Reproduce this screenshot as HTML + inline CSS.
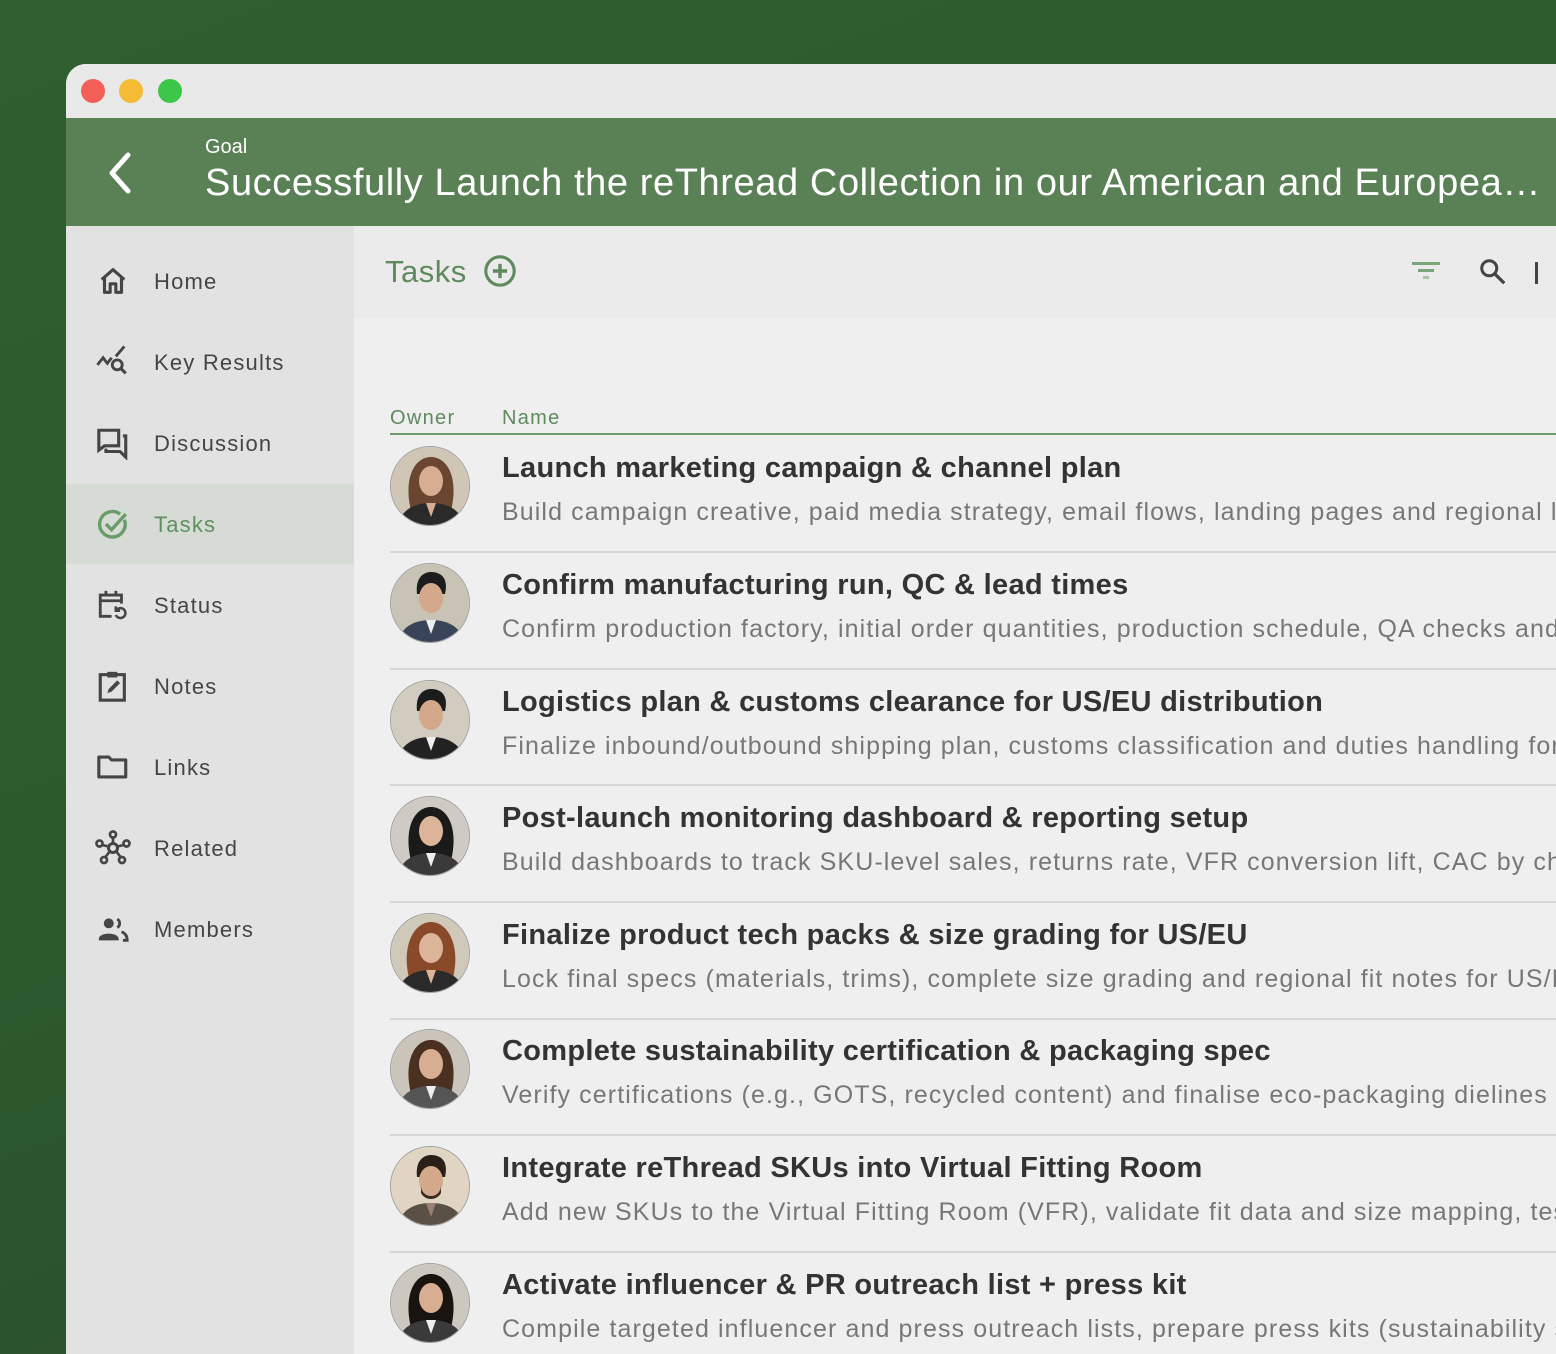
<!DOCTYPE html>
<html><head><meta charset="utf-8"><style>
*{margin:0;padding:0;box-sizing:border-box}
html,body{width:1556px;height:1354px;overflow:hidden}
body{font-family:"Liberation Sans",sans-serif;background:linear-gradient(160deg,#2f5e30 0%,#2c5a2d 50%,#284a29 100%);position:relative}
.win{position:absolute;left:66px;top:64px;width:1490px;height:1290px;border-top-left-radius:20px;overflow:hidden;background:#efefef}
.tb{position:absolute;left:0;top:0;width:1490px;height:54px;background:#e9e9e9}
.dot{position:absolute;top:15px;width:24px;height:24px;border-radius:50%}
.hdr{position:absolute;top:54px;left:0;width:1490px;height:108px;background:#5a8055;color:#fff}
.goal{position:absolute;left:139px;top:18px;font-size:20px}
.title{position:absolute;left:139px;top:44px;font-size:38px;letter-spacing:.6px;width:1351px;white-space:nowrap;overflow:hidden;text-overflow:ellipsis}
.side{position:absolute;left:0;top:162px;width:288px;height:1130px;background:#e2e2e2}
.item{position:absolute;left:0;width:288px;height:80px;color:#454545;font-size:22px;letter-spacing:1.2px}
.item svg{position:absolute;left:30px;top:23px}
.item span{position:absolute;left:88px;top:28px}
.item.act{background:#d6dcd5;color:#5f8f5f}
.tbar{position:absolute;left:288px;top:162px;width:1202px;height:92px;background:#ebebeb}
.th{position:absolute;top:343px;font-size:20px;color:#5e8a5e;letter-spacing:1.3px}
.row{position:absolute;left:324px;width:1166px;height:110px}
.av{position:absolute;left:0;top:0;width:80px;height:80px;border-radius:50%;overflow:hidden;border:1.5px solid #a0a0a0}
.t{position:absolute;left:112px;top:6px;font-size:29px;font-weight:bold;color:#333;white-space:nowrap;letter-spacing:.3px}
.s{position:absolute;left:112px;top:52px;font-size:25px;color:#777;white-space:nowrap;letter-spacing:1.1px}
.sep{position:absolute;left:324px;width:1166px;height:2px;background:#d6d6d6}
</style></head><body>
<div class="win">
<div class="tb">
<div class="dot" style="left:15px;background:#f25f57"></div>
<div class="dot" style="left:53px;background:#f6bb34"></div>
<div class="dot" style="left:92px;background:#3cc64a"></div>
</div>
<div class="hdr">
<svg style="position:absolute;left:40px;top:33px" width="28" height="44" viewBox="0 0 28 44"><path d="M22 4 L6 22 L22 40" fill="none" stroke="#fff" stroke-width="5" stroke-linecap="round" stroke-linejoin="round"/></svg>
<div class="goal">Goal</div>
<div class="title">Successfully Launch the reThread Collection in our American and European Markets</div>
</div>
<div class="side">
<div class="item" style="top:15px"><svg width="34" height="34" viewBox="0 0 24 24"><path d="M4 11 L12 4 L20 11 M6 9.5 V20 H10 V14 H14 V20 H18 V9.5" fill="none" stroke="#454545" stroke-width="2.2" stroke-linejoin="round"/></svg><span>Home</span></div>
<div class="item" style="top:96px"><svg width="34" height="34" viewBox="0 0 24 24"><path d="M1 14 L5 9 L8 13 L11 9 M14 8 L20 1" fill="none" stroke="#454545" stroke-width="2"/><circle cx="15" cy="14" r="3.5" fill="none" stroke="#454545" stroke-width="2"/><path d="M17.5 16.5 L21 20" stroke="#454545" stroke-width="2.2"/></svg><span>Key Results</span></div>
<div class="item" style="top:177px"><svg width="34" height="34" viewBox="0 0 24 24"><path d="M2 3 H16 V14 H6 L2 17 Z" fill="none" stroke="#454545" stroke-width="2.2"/><path d="M19 7 H21 V22 L17 18 H7 V16" fill="none" stroke="#454545" stroke-width="2.2"/></svg><span>Discussion</span></div>
<div class="item act" style="top:258px"><svg width="34" height="34" viewBox="0 0 24 24"><path d="M20 9 A9 9 0 1 1 17 5" fill="none" stroke="#6a9c6a" stroke-width="2.4"/><path d="M7 12 L11 16 L21 5" fill="none" stroke="#6a9c6a" stroke-width="2.4"/></svg><span>Tasks</span></div>
<div class="item" style="top:339px"><svg width="34" height="34" viewBox="0 0 24 24"><path d="M11 20 H3 V5 H18 V11 M3 9 H18 M7 2 V6 M14 2 V6" fill="none" stroke="#454545" stroke-width="2"/><path d="M14 19 A3.5 3.5 0 1 0 15 15 M14 13 V16 H17" fill="none" stroke="#454545" stroke-width="1.8"/></svg><span>Status</span></div>
<div class="item" style="top:420px"><svg width="34" height="34" viewBox="0 0 24 24"><rect x="3" y="4" width="17" height="18" fill="none" stroke="#454545" stroke-width="2.2"/><rect x="8" y="2" width="7" height="4" fill="#454545"/><path d="M8 17 L9 14 L15 8 L17 10 L11 16 Z" fill="#454545"/></svg><span>Notes</span></div>
<div class="item" style="top:501px"><svg width="34" height="34" viewBox="0 0 24 24"><path d="M2 5 H9 L11 7 H21 V19 H2 Z" fill="none" stroke="#454545" stroke-width="2.2" stroke-linejoin="round"/></svg><span>Links</span></div>
<div class="item" style="top:582px"><svg width="36" height="36" viewBox="0 0 24 24" style="left:29px;top:22px"><circle cx="12" cy="12" r="3" fill="none" stroke="#454545" stroke-width="2"/><circle cx="12" cy="3" r="2" fill="none" stroke="#454545" stroke-width="1.8"/><circle cx="3" cy="9" r="2" fill="none" stroke="#454545" stroke-width="1.8"/><circle cx="21" cy="9" r="2" fill="none" stroke="#454545" stroke-width="1.8"/><circle cx="6" cy="20" r="2" fill="none" stroke="#454545" stroke-width="1.8"/><circle cx="18" cy="20" r="2" fill="none" stroke="#454545" stroke-width="1.8"/><path d="M12 5 V9 M5 10 L9 11 M19 10 L15 11 M7 18 L10 14 M17 18 L14 14" stroke="#454545" stroke-width="1.8"/></svg><span>Related</span></div>
<div class="item" style="top:663px"><svg width="34" height="34" viewBox="0 0 24 24"><circle cx="9" cy="8" r="3.5" fill="#454545"/><path d="M2 19 C2 14 16 14 16 19 V20 H2 Z" fill="#454545"/><path d="M15 5 A3.5 3.5 0 0 1 15 11 M18 14 C21 15 22 17 22 20 H19" fill="none" stroke="#454545" stroke-width="2"/></svg><span>Members</span></div>
</div>
<div class="tbar">
<div style="position:absolute;left:31px;top:28px;font-size:31px;color:#5e8a5e;letter-spacing:.5px">Tasks</div>
<svg style="position:absolute;left:129px;top:28px" width="34" height="34" viewBox="0 0 24 24"><circle cx="12" cy="12" r="10" fill="none" stroke="#5e8a5e" stroke-width="2.2"/><path d="M12 7 V17 M7 12 H17" stroke="#5e8a5e" stroke-width="2.4"/></svg>
<div style="position:absolute;left:1058px;top:36px;width:28px;height:3px;background:#7aa578"></div>
<div style="position:absolute;left:1064px;top:43px;width:16px;height:3px;background:#7aa578"></div>
<div style="position:absolute;left:1069px;top:50px;width:6px;height:3px;background:#a8c4a6"></div>
<svg style="position:absolute;left:1124px;top:31px" width="30" height="30" viewBox="0 0 24 24"><circle cx="9" cy="9" r="6" fill="none" stroke="#444" stroke-width="2.4"/><path d="M13.5 13.5 L21 21" stroke="#444" stroke-width="2.6"/></svg>
<div style="position:absolute;left:1181px;top:36px;width:3px;height:22px;background:#444"></div>
</div>

<div class="th" style="left:324px">Owner</div>
<div class="th" style="left:436px">Name</div>
<div style="position:absolute;left:324px;top:369px;width:1166px;height:2px;background:#6e9a6c"></div>

<div class="row" style="top:382px"><div class="av"><svg width="80" height="80" viewBox="0 0 80 80"><rect width="80" height="80" fill="#cfc6b6"/><path d="M20 64 C12 30 24 10 40 10 C56 10 68 30 60 64 Z" fill="#6a4530"/><ellipse cx="40" cy="34" rx="12" ry="15" fill="#d8ae92"/><path d="M6 80 C10 62 24 56 40 56 C56 56 70 62 74 80 Z" fill="#2a2a2a"/><path d="M35 56 L40 70 L45 56 Z" fill="#d8ae92"/></svg></div><div class="t">Launch marketing campaign &amp; channel plan</div><div class="s">Build campaign creative, paid media strategy, email flows, landing pages and regional launch calendar</div></div>
<div class="sep" style="top:487px"></div>
<div class="row" style="top:499px"><div class="av"><svg width="80" height="80" viewBox="0 0 80 80"><rect width="80" height="80" fill="#c9c3b6"/><path d="M26 30 C24 12 34 8 40 8 C48 8 58 12 54 30 Z" fill="#1c1c1c"/><ellipse cx="40" cy="34" rx="12" ry="15" fill="#d4a88a"/><path d="M6 80 C10 62 24 56 40 56 C56 56 70 62 74 80 Z" fill="#3a4458"/><path d="M35 56 L40 70 L45 56 Z" fill="#eee"/></svg></div><div class="t">Confirm manufacturing run, QC &amp; lead times</div><div class="s">Confirm production factory, initial order quantities, production schedule, QA checks and lead times</div></div>
<div class="sep" style="top:604px"></div>
<div class="row" style="top:616px"><div class="av"><svg width="80" height="80" viewBox="0 0 80 80"><rect width="80" height="80" fill="#d2ccc0"/><path d="M26 30 C24 12 34 8 40 8 C48 8 58 12 54 30 Z" fill="#1c1c1c"/><ellipse cx="40" cy="34" rx="12" ry="15" fill="#d4a88a"/><path d="M6 80 C10 62 24 56 40 56 C56 56 70 62 74 80 Z" fill="#222"/><path d="M35 56 L40 70 L45 56 Z" fill="#eee"/></svg></div><div class="t">Logistics plan &amp; customs clearance for US/EU distribution</div><div class="s">Finalize inbound/outbound shipping plan, customs classification and duties handling for both markets</div></div>
<div class="sep" style="top:720px"></div>
<div class="row" style="top:732px"><div class="av"><svg width="80" height="80" viewBox="0 0 80 80"><rect width="80" height="80" fill="#cfcbc4"/><path d="M20 64 C12 30 24 10 40 10 C56 10 68 30 60 64 Z" fill="#1a1a1a"/><ellipse cx="40" cy="34" rx="12" ry="15" fill="#dcb49a"/><path d="M6 80 C10 62 24 56 40 56 C56 56 70 62 74 80 Z" fill="#3a3a3a"/><path d="M35 56 L40 70 L45 56 Z" fill="#eee"/></svg></div><div class="t">Post-launch monitoring dashboard &amp; reporting setup</div><div class="s">Build dashboards to track SKU-level sales, returns rate, VFR conversion lift, CAC by channel</div></div>
<div class="sep" style="top:837px"></div>
<div class="row" style="top:849px"><div class="av"><svg width="80" height="80" viewBox="0 0 80 80"><rect width="80" height="80" fill="#d0c8b8"/><path d="M18 64 C10 30 24 8 40 8 C56 8 70 30 62 64 Z" fill="#8a4a2a"/><ellipse cx="40" cy="34" rx="12" ry="15" fill="#dcb49a"/><path d="M6 80 C10 62 24 56 40 56 C56 56 70 62 74 80 Z" fill="#2a2a2a"/><path d="M35 56 L40 70 L45 56 Z" fill="#dcb49a"/></svg></div><div class="t">Finalize product tech packs &amp; size grading for US/EU</div><div class="s">Lock final specs (materials, trims), complete size grading and regional fit notes for US/EU</div></div>
<div class="sep" style="top:954px"></div>
<div class="row" style="top:965px"><div class="av"><svg width="80" height="80" viewBox="0 0 80 80"><rect width="80" height="80" fill="#cac4ba"/><path d="M20 64 C12 30 24 10 40 10 C56 10 68 30 60 64 Z" fill="#4a3020"/><ellipse cx="40" cy="34" rx="12" ry="15" fill="#d8ae92"/><path d="M6 80 C10 62 24 56 40 56 C56 56 70 62 74 80 Z" fill="#555"/><path d="M35 56 L40 70 L45 56 Z" fill="#eee"/></svg></div><div class="t">Complete sustainability certification &amp; packaging spec</div><div class="s">Verify certifications (e.g., GOTS, recycled content) and finalise eco-packaging dielines</div></div>
<div class="sep" style="top:1070px"></div>
<div class="row" style="top:1082px"><div class="av"><svg width="80" height="80" viewBox="0 0 80 80"><rect width="80" height="80" fill="#e0d4c2"/><path d="M26 30 C24 12 34 8 40 8 C48 8 58 12 54 30 Z" fill="#2a2018"/><ellipse cx="40" cy="34" rx="12" ry="15" fill="#d4a88a"/><path d="M30 40 C32 52 48 52 50 40 L50 46 C46 54 34 54 30 46 Z" fill="#3a2a20"/><path d="M6 80 C10 62 24 56 40 56 C56 56 70 62 74 80 Z" fill="#5a5045"/><path d="M35 56 L40 70 L45 56 Z" fill="#9a8070"/></svg></div><div class="t">Integrate reThread SKUs into Virtual Fitting Room</div><div class="s">Add new SKUs to the Virtual Fitting Room (VFR), validate fit data and size mapping, test flows</div></div>
<div class="sep" style="top:1187px"></div>
<div class="row" style="top:1199px"><div class="av"><svg width="80" height="80" viewBox="0 0 80 80"><rect width="80" height="80" fill="#cdc8bf"/><path d="M20 64 C12 30 24 10 40 10 C56 10 68 30 60 64 Z" fill="#1a1410"/><ellipse cx="40" cy="34" rx="12" ry="15" fill="#d8ae92"/><path d="M6 80 C10 62 24 56 40 56 C56 56 70 62 74 80 Z" fill="#3a3a3a"/><path d="M35 56 L40 70 L45 56 Z" fill="#eee"/></svg></div><div class="t">Activate influencer &amp; PR outreach list + press kit</div><div class="s">Compile targeted influencer and press outreach lists, prepare press kits (sustainability story)</div></div>
</div>
</body></html>
